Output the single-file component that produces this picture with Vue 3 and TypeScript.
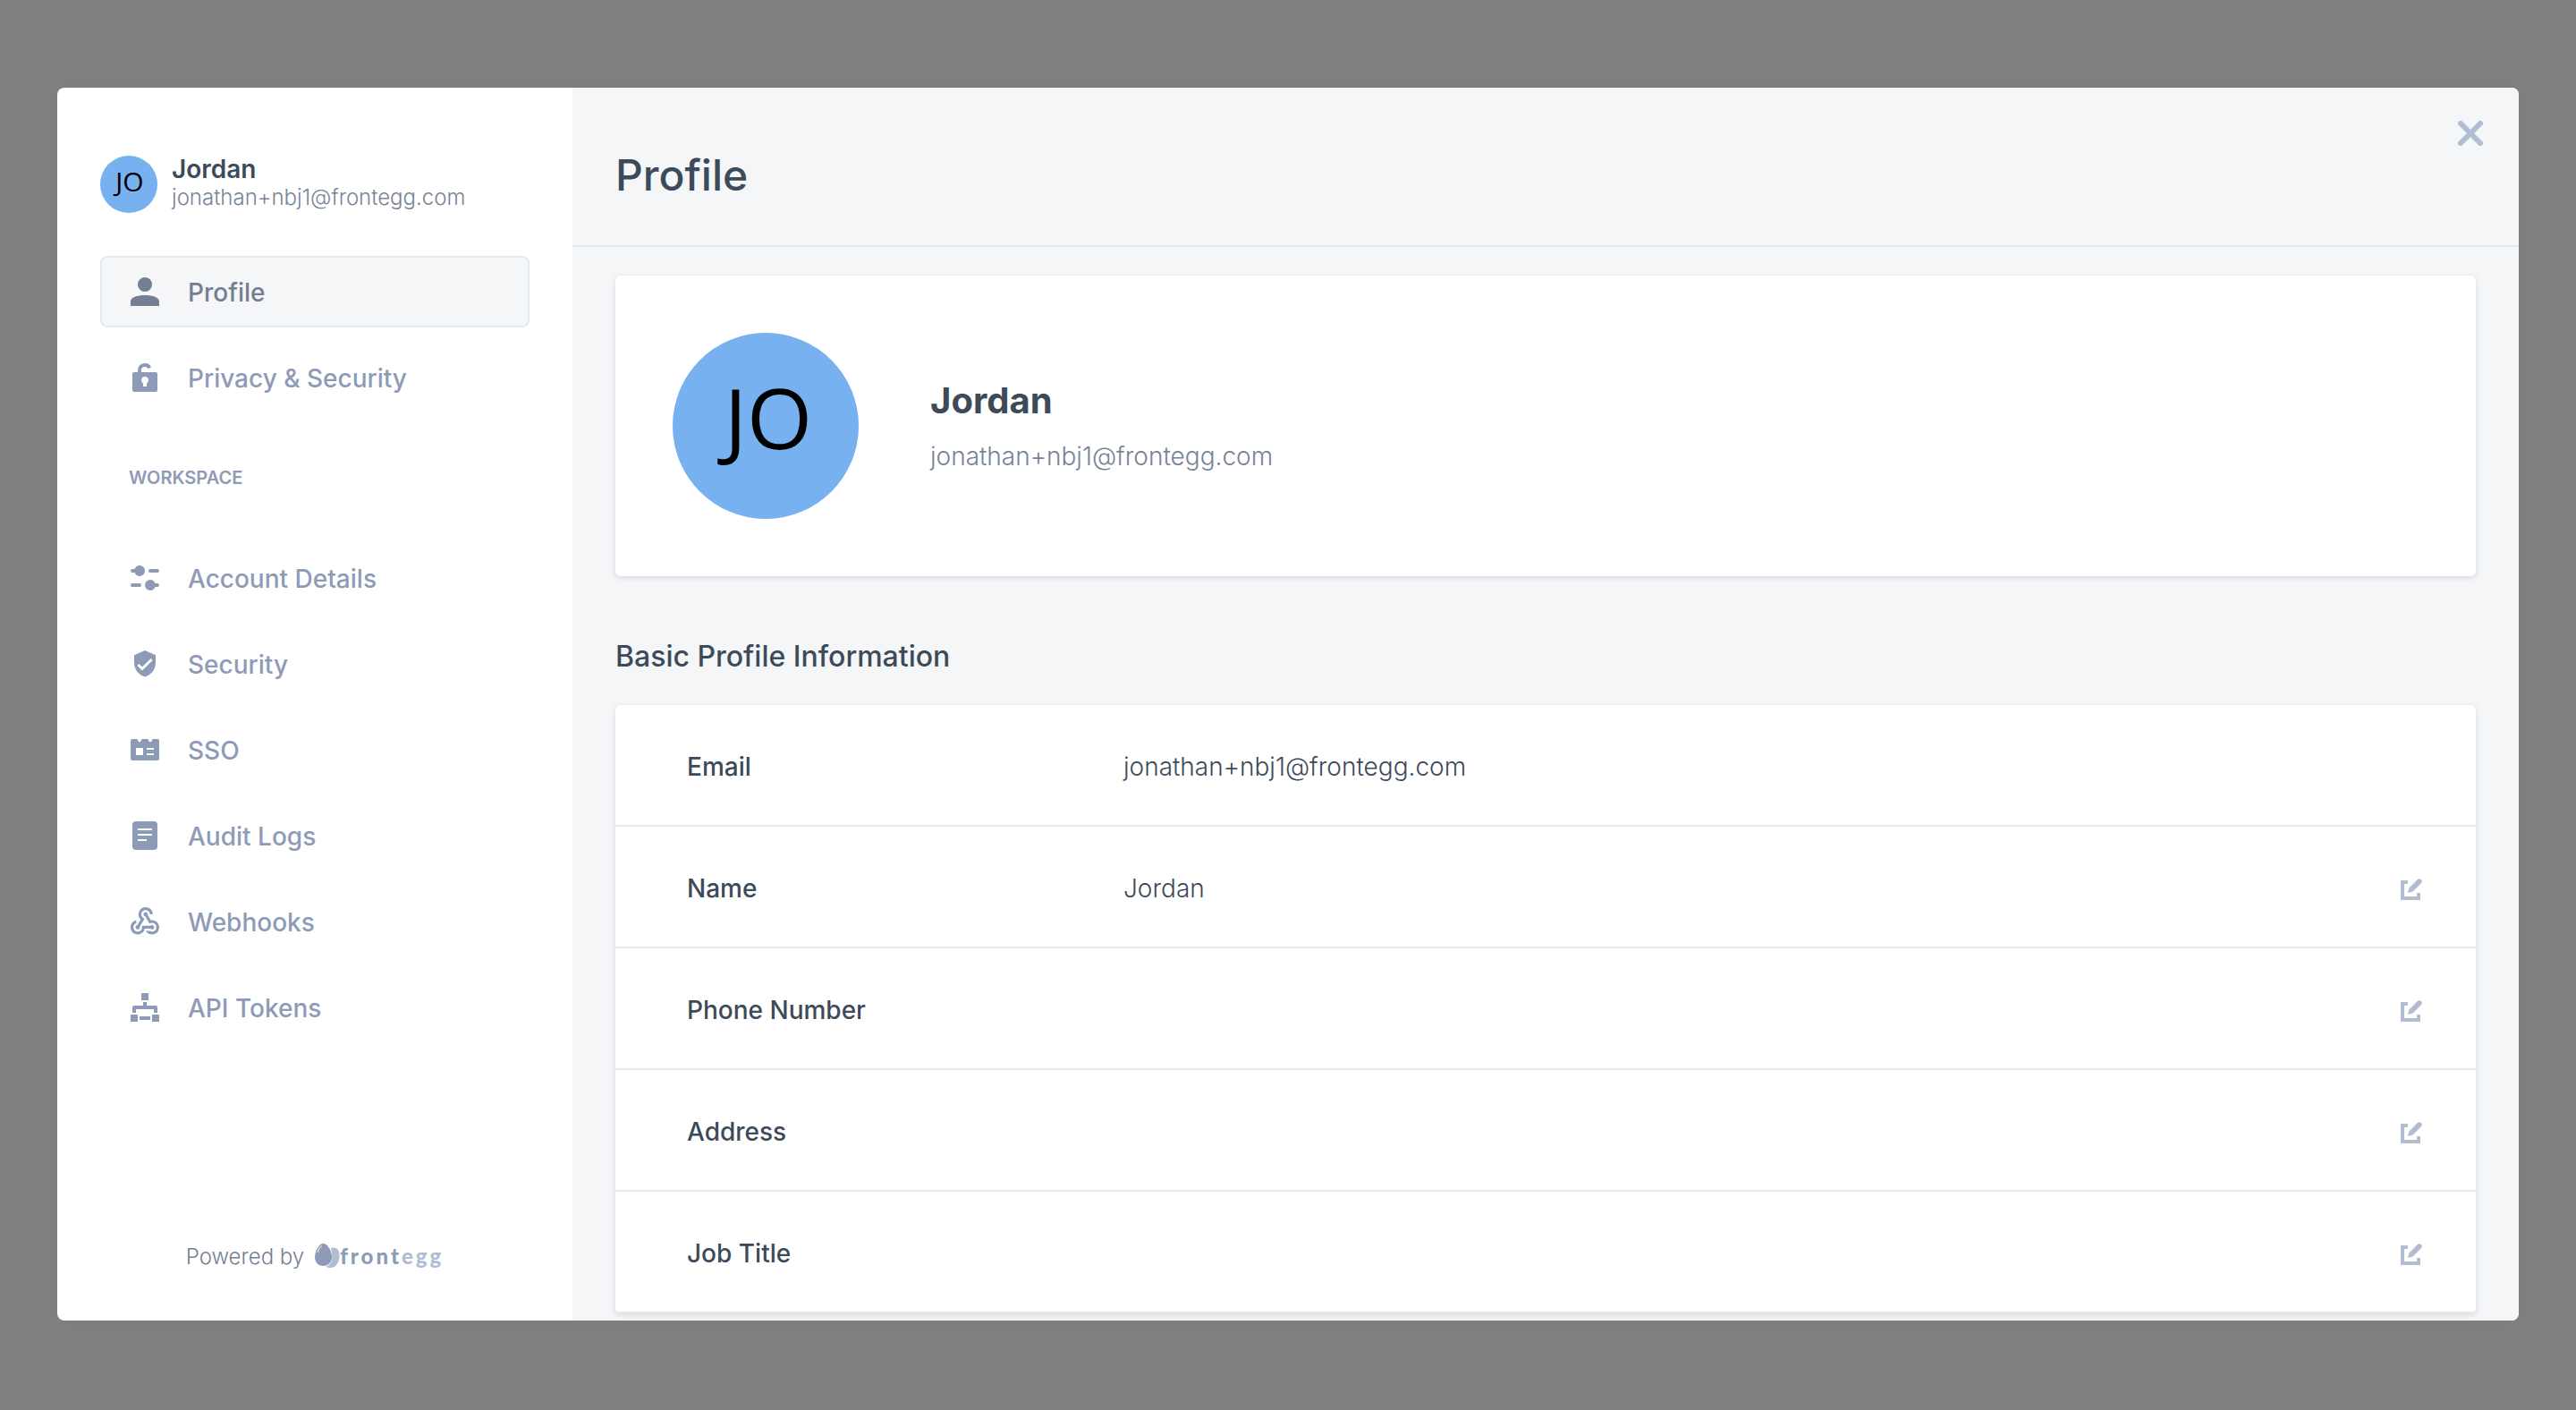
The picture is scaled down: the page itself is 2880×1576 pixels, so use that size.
<script setup lang="ts">
interface NavItem {
  label: string
  icon: string
  active?: boolean
}

interface Field {
  label: string
  value: string
  editable: boolean
}

const user = { name: 'Jordan', email: 'jonathan+nbj1@frontegg.com', initials: 'JO' }

const personal: NavItem[] = [
  { label: 'Profile', icon: 'person', active: true },
  { label: 'Privacy & Security', icon: 'lock' },
]

const workspace: NavItem[] = [
  { label: 'Account Details', icon: 'sliders' },
  { label: 'Security', icon: 'shield' },
  { label: 'SSO', icon: 'sso' },
  { label: 'Audit Logs', icon: 'logs' },
  { label: 'Webhooks', icon: 'webhook' },
  { label: 'API Tokens', icon: 'api' },
]

const groups = [
  { title: '', items: personal },
  { title: 'WORKSPACE', items: workspace },
]

const paths: Record<string, string> = {
  person: 'M12 4a4 4 0 1 1 0 8 4 4 0 0 1 0-8zM12 14c4.42 0 8 1.3 8 3.4V20H4v-2.600C4 15.300 7.580 14 12 14z',
  lock: 'M6 9h2V8a4 4 0 0 1 7.500-1.900l-1.700 1A2 2 0 0 0 10 8v1h8a1 1 0 0 1 1 1v9a1 1 0 0 1-1 1H6a1 1 0 0 1-1-1v-9a1 1 0 0 1 1-1zM11 15.200V17h2v-1.800a2 2 0 1 0-2 0z',
  sliders: 'M9 5a3 3 0 0 1 0 6c-1.300 0-2.200-.8-2.700-2H5a1 1 0 0 1 0-2h1.300C6.800 5.800 7.700 5 9 5zM15 7h4a1 1 0 0 1 0 2h-4a1 1 0 0 1 0-2zM5 15h4a1 1 0 0 1 0 2H5a1 1 0 0 1 0-2zM15 13c1.300 0 2.200.8 2.700 2H19a1 1 0 0 1 0 2h-1.300c-.5 1.200-1.400 2-2.700 2a3 3 0 0 1 0-6z',
  shield: 'M12 4.500l6 2.600v4.300c0 3.700-2.500 6.900-6 7.800-3.500-.9-6-4.100-6-7.800V7.100zM8.700 12l-1 1 2.800 2.800 5.800-5.800-1-1-4.800 4.800z',
  sso: 'M5 6h2.700l.6 1.200q.7 1 1.400 0L10.300 6h3.400l.6 1.200q.7 1 1.400 0L16.300 6H19a1 1 0 0 1 1 1v10a1 1 0 0 1-1 1H5a1 1 0 0 1-1-1V7a1 1 0 0 1 1-1zM7 11v4h4v-4zM13 11v1h4v-1zM13 14v1h4v-1z',
  logs: 'M7 4h10a2 2 0 0 1 2 2v12a2 2 0 0 1-2 2H7a2 2 0 0 1-2-2V6a2 2 0 0 1 2-2zM8 8v1h8V8zM8 11v1h8v-1zM8 14v1h5v-1z',
  webhook: 'M10 15h5.880c.27-.31.67-.5 1.120-.5.83 0 1.500.67 1.500 1.500s-.67 1.500-1.500 1.500c-.44 0-.84-.19-1.120-.5H11.900c-.46 2.280-2.480 4-4.900 4-2.760 0-5-2.240-5-5 0-2.420 1.720-4.440 4-4.900v2.070C4.840 13.580 4 14.700 4 16c0 1.650 1.350 3 3 3s3-1.350 3-3v-1zm2.500-11c1.650 0 3 1.350 3 3h2c0-2.760-2.240-5-5-5s-5 2.240-5 5c0 1.430.6 2.710 1.550 3.620l-2.350 3.900c-.68.14-1.200.75-1.200 1.480 0 .83.67 1.500 1.500 1.500s1.500-.67 1.500-1.500c0-.16-.02-.31-.07-.45l3.380-5.630C10.490 9.610 9.500 8.420 9.500 7c0-1.650 1.350-3 3-3zm4.500 9c-.64 0-1.230.2-1.720.54l-3.050-5.070C11.530 8.350 11 7.740 11 7c0-.83.67-1.500 1.500-1.500S14 6.170 14 7c0 .15-.02.29-.06.43l2.190 3.650c.28-.05.57-.08.87-.08 2.760 0 5 2.240 5 5s-2.240 5-5 5c-1.850 0-3.470-1.010-4.330-2.500h2.670c.48.32 1.050.5 1.660.5 1.650 0 3-1.350 3-3s-1.350-3-3-3z',
  api: 'M10 4h4v4h-4zM11 9h2v2h5a1 1 0 0 1 1 1v3h-2v-2H7v2H5v-3a1 1 0 0 1 1-1h5zM4 16h4v4H4zM16 16h4v4h-4zM9 17h6v2H9z',
}

const fields: Field[] = [
  { label: 'Email', value: user.email, editable: false },
  { label: 'Name', value: user.name, editable: true },
  { label: 'Phone Number', value: '', editable: true },
  { label: 'Address', value: '', editable: true },
  { label: 'Job Title', value: '', editable: true },
]
</script>

<template>
  <div class="overlay">
    <div class="modal" role="dialog" aria-labelledby="page-title">
      <aside class="sidebar">
        <div class="user">
          <div class="avatar">{{ user.initials }}</div>
          <div class="user-text">
            <div class="user-name">{{ user.name }}</div>
            <div class="user-email">{{ user.email }}</div>
          </div>
        </div>

        <nav class="nav">
          <template v-for="group in groups" :key="group.title">
            <h2 v-if="group.title" class="nav-title">{{ group.title }}</h2>
            <ul class="nav-list">
              <li v-for="item in group.items" :key="item.label">
                <a href="#" class="nav-item" :class="{ active: item.active }">
                  <svg class="nav-icon" viewBox="0 0 24 24" aria-hidden="true">
                    <path
                      :d="paths[item.icon]"
                      fill-rule="evenodd"
                      :transform="item.icon === 'webhook' ? 'translate(2.4 2.4) scale(.8)' : undefined"
                    />
                  </svg>
                  <span class="nav-label">{{ item.label }}</span>
                </a>
              </li>
            </ul>
          </template>
        </nav>

        <footer class="powered">
          <span>Powered by</span>
          <span class="brand">
            <svg class="egg" viewBox="0 0 28 28" aria-hidden="true">
              <path d="M18 5c6 -1 9.500 1 9.500 8 0 8-4 14-10 14-2 0-4-.6-5-1.600C18.500 24 21 18 18 5z" fill="#b0bdd3" />
              <path d="M9.500 0C14 0 19 8 19 15c0 6-4 10-9.500 10S0 21 0 15C0 8 5 0 9.500 0z" fill="#8e9bb7" />
              <path d="M3.300 9.500C4 6.500 5.500 4 7.500 2.800" fill="none" stroke="#fff" stroke-width="1" stroke-linecap="round" />
            </svg>
            <span class="wordmark">front<span class="wordmark-light">egg</span></span>
          </span>
        </footer>
      </aside>

      <main class="main">
        <header class="header">
          <h1 id="page-title" class="title">Profile</h1>
          <button type="button" class="close" aria-label="Close">
            <svg viewBox="0 0 28 28" width="28" height="28">
              <path d="M3 3l22 22M25 3L3 25" fill="none" stroke="currentColor" stroke-width="6" stroke-linecap="round" />
            </svg>
          </button>
        </header>

        <div class="content">
          <section class="card summary">
            <div class="avatar avatar-large">{{ user.initials }}</div>
            <div class="summary-text">
              <div class="summary-name">{{ user.name }}</div>
              <div class="summary-email">{{ user.email }}</div>
            </div>
          </section>

          <h2 class="section-title">Basic Profile Information</h2>

          <dl class="card fields">
            <div v-for="field in fields" :key="field.label" class="row">
              <dt>{{ field.label }}</dt>
              <dd class="value">{{ field.value }}</dd>
              <dd v-if="field.editable" class="action">
                <button type="button" class="edit" :aria-label="`Edit ${field.label}`">
                  <svg viewBox="0 0 24 24" width="24" height="24">
                    <path d="M1 2h7v4H4v14h14v-4h4v7a1 1 0 0 1-1 1H1a1 1 0 0 1-1-1V3a1 1 0 0 1 1-1z" />
                    <path d="M8 16l1.400-5.600 8.900-9q2.400-2.200 4.500-.3t-.2 4.500l-9 8.900z" />
                  </svg>
                </button>
              </dd>
            </div>
          </dl>
        </div>
      </main>
    </div>
  </div>
</template>

<style>
body {
  background: #808080;
}
</style>

<style scoped>
* {
  box-sizing: border-box;
}

h1,
h2,
ul,
dl,
dd {
  margin: 0;
  padding: 0;
}

button {
  padding: 0;
  border: 0;
  background: none;
  color: #b0bdd3;
  cursor: pointer;
}

.overlay {
  display: flex;
  min-height: 100vh;
  padding: 98px 64px 100px;
  background: #808080;
  color: #3c4a5a;
  font-family: Inter, "Liberation Sans", sans-serif;
  font-size: 28px;
  line-height: 36px;
}

.modal {
  display: flex;
  flex: 1;
  overflow: hidden;
  border-radius: 8px;
  background: #fff;
  box-shadow: 0 0 24px rgba(0, 0, 0, 0.04);
}

.sidebar {
  display: flex;
  flex: none;
  flex-direction: column;
  width: 576px;
  padding: 76px 48px 46px;
}

.user {
  display: flex;
  align-items: center;
  gap: 16px;
}

.avatar {
  display: flex;
  flex: none;
  align-items: center;
  justify-content: center;
  width: 64px;
  height: 64px;
  padding: 0 0 6px 2px;
  border-radius: 50%;
  background: #78b1f0;
  color: #000;
  font-family: "Open Sans", "Noto Sans", sans-serif;
  font-size: 30px;
}

.user-name {
  font-weight: 600;
  line-height: 30px;
}

.user-email {
  color: #778397;
  font-size: 24px;
  font-weight: 300;
  line-height: 34px;
}

.nav {
  margin-top: 48px;
}

.nav-list {
  display: flex;
  flex-direction: column;
  gap: 16px;
  list-style: none;
}

.nav-title {
  margin: 60px 0;
  padding-left: 32px;
  color: #8e9bb7;
  font-size: 20px;
  font-weight: 600;
  line-height: 24px;
}

.nav-item {
  display: flex;
  align-items: center;
  gap: 24px;
  height: 80px;
  padding: 0 24px;
  border: 2px solid transparent;
  border-radius: 8px;
  color: #8e9bb7;
  font-weight: 500;
  text-decoration: none;
}

.nav-item.active {
  border-color: #e5e9f2;
  background: #f4f6f8;
  color: #747f92;
}

.nav-icon {
  flex: none;
  width: 48px;
  height: 48px;
  fill: currentColor;
}

.nav-label {
  padding-top: 2px;
}

.powered {
  display: flex;
  align-items: center;
  justify-content: center;
  gap: 12px;
  margin-top: auto;
  color: #747f92;
  font-size: 24px;
  font-weight: 300;
  line-height: 48px;
}

.brand {
  display: flex;
  align-items: center;
  padding-bottom: 2px;
}

.egg {
  width: 28px;
  height: 28px;
}

.wordmark {
  color: #8e9bb7;
  font-family: Lato, sans-serif;
  font-weight: 900;
  letter-spacing: 3px;
}

.wordmark-light {
  color: #b0bdd3;
}

.main {
  flex: 1;
  min-width: 0;
  background: #f4f6f8;
}

.header {
  display: flex;
  align-items: flex-start;
  justify-content: space-between;
  padding: 27px 30px 54px 48px;
  border-bottom: 2px solid #e5e9f2;
}

.title {
  padding-top: 47px;
  font-size: 48px;
  font-weight: 500;
  line-height: 48px;
}

.close {
  display: flex;
  align-items: center;
  justify-content: center;
  width: 48px;
  height: 48px;
}

.content {
  padding: 32px 48px 8px;
}

.card {
  border-radius: 6px;
  background: #fff;
  box-shadow: 0 2px 6px rgba(60, 74, 90, 0.16);
}

.summary {
  display: flex;
  align-items: center;
  gap: 80px;
  padding: 64px;
}

.avatar-large {
  width: 208px;
  height: 208px;
  padding: 0 0 20px 6px;
  font-size: 94px;
}

.summary-text {
  padding-bottom: 4px;
}

.summary-name {
  font-size: 40px;
  font-weight: 700;
  line-height: 56px;
}

.summary-email {
  margin-top: 16px;
  color: #778397;
  font-weight: 300;
}

.section-title {
  margin: 66px 0 30px;
  font-size: 32px;
  font-weight: 500;
  line-height: 48px;
}

.fields {
  overflow: hidden;
}

.row {
  display: flex;
  align-items: center;
  height: 136px;
  padding: 4px 48px 0 80px;
  border-bottom: 2px solid #e3e8ed;
}

dt {
  flex: none;
  width: 488px;
  font-weight: 500;
}

.value {
  flex: 1;
  font-weight: 300;
}

.edit {
  display: flex;
  align-items: center;
  justify-content: center;
  width: 48px;
  height: 48px;
  padding-top: 2px;
}

.edit svg {
  fill: currentColor;
}
</style>
